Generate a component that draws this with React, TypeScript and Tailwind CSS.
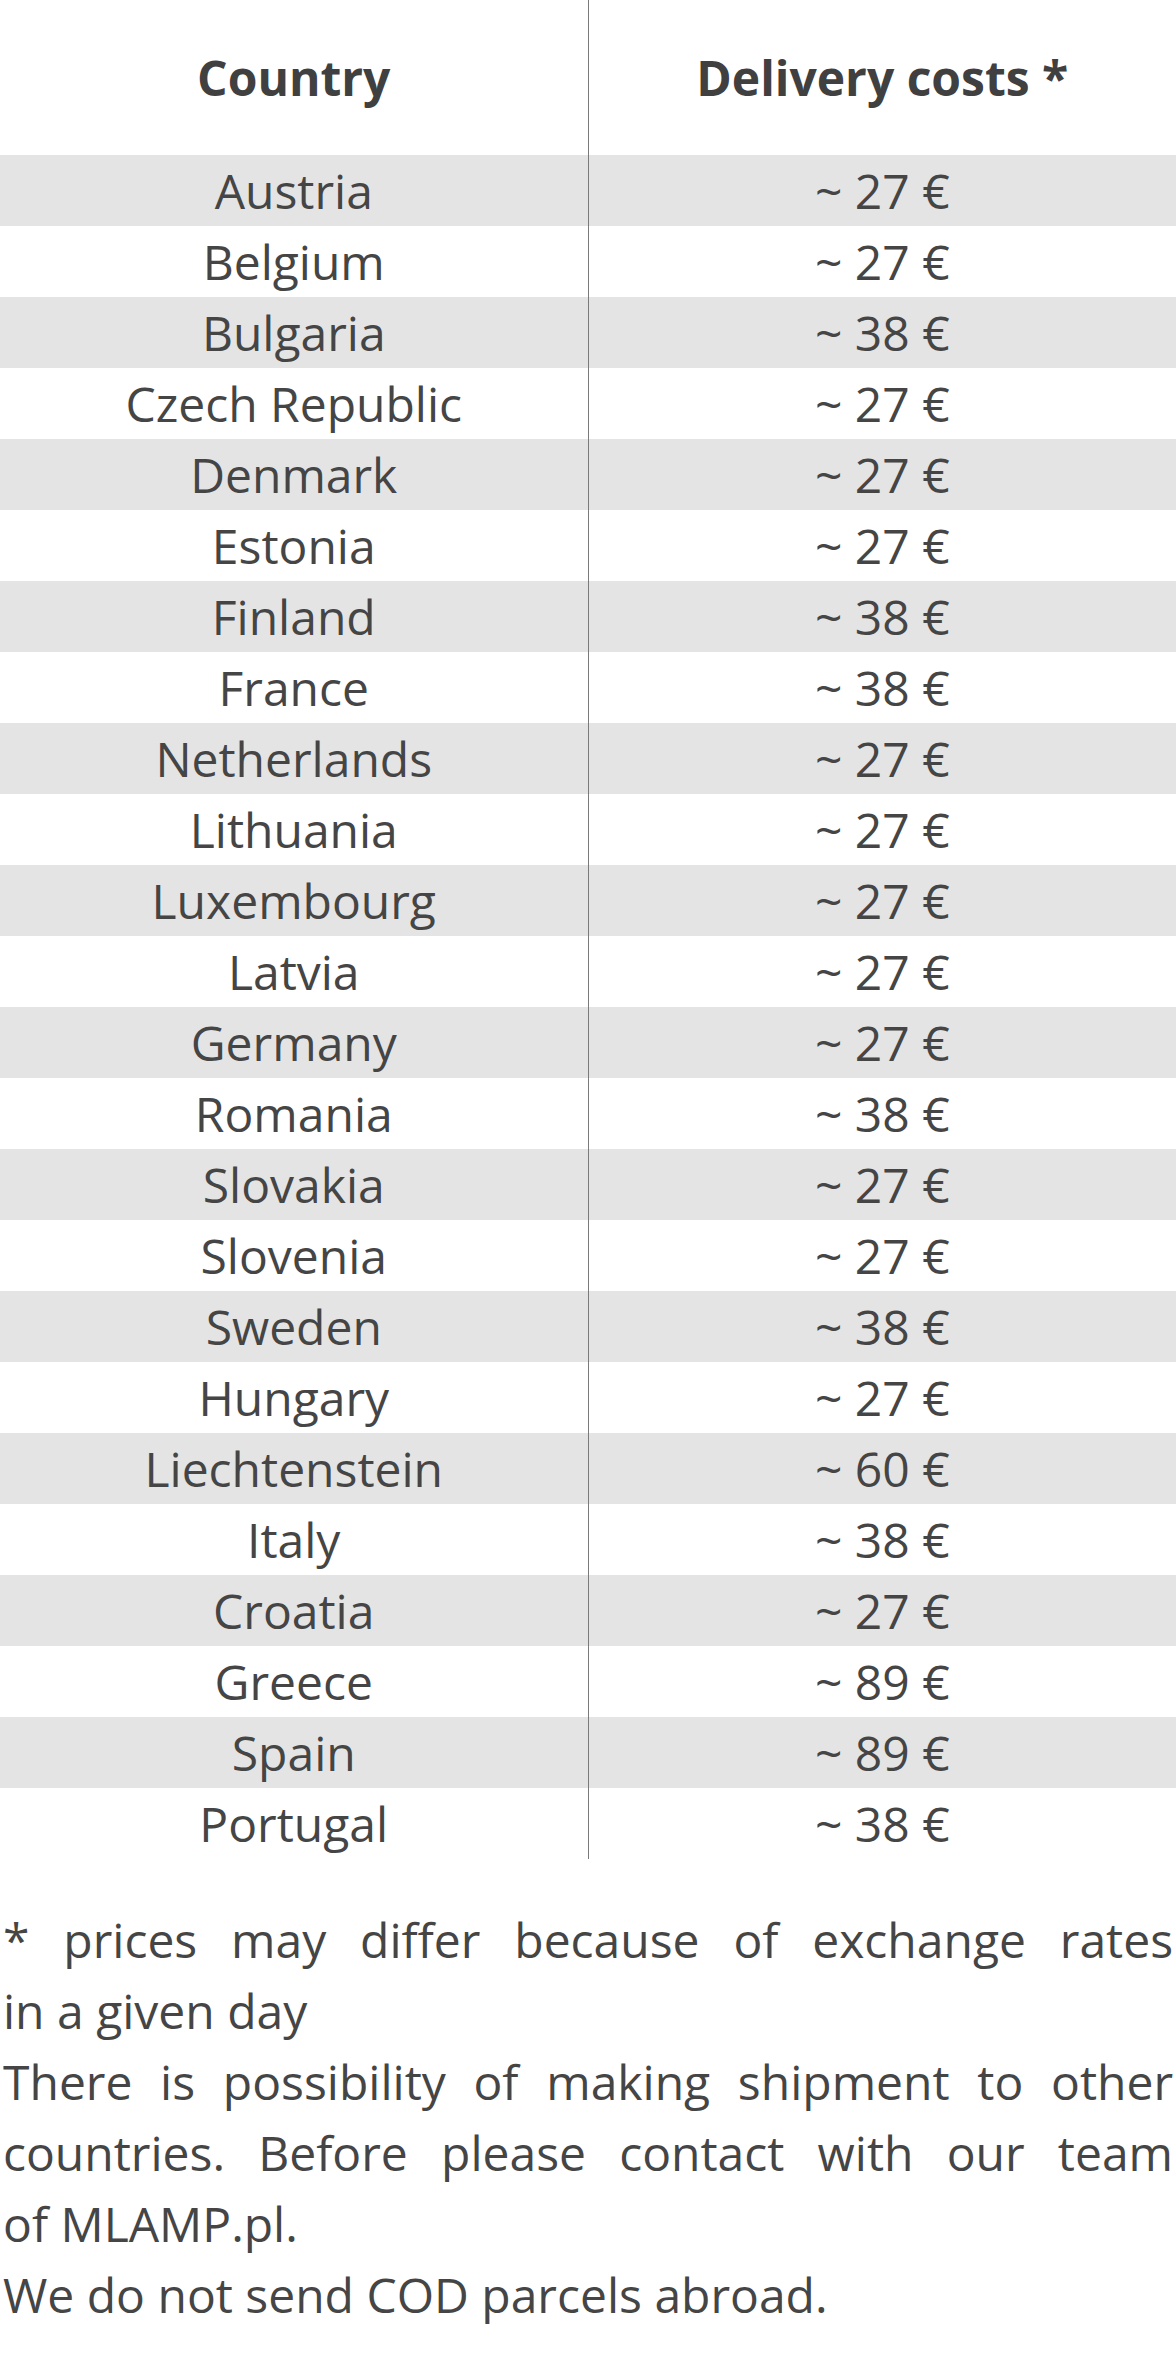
const rows: [string, string][] = [
  ['Austria', '27'],
  ['Belgium', '27'],
  ['Bulgaria', '38'],
  ['Czech Republic', '27'],
  ['Denmark', '27'],
  ['Estonia', '27'],
  ['Finland', '38'],
  ['France', '38'],
  ['Netherlands', '27'],
  ['Lithuania', '27'],
  ['Luxembourg', '27'],
  ['Latvia', '27'],
  ['Germany', '27'],
  ['Romania', '38'],
  ['Slovakia', '27'],
  ['Slovenia', '27'],
  ['Sweden', '38'],
  ['Hungary', '27'],
  ['Liechtenstein', '60'],
  ['Italy', '38'],
  ['Croatia', '27'],
  ['Greece', '89'],
  ['Spain', '89'],
  ['Portugal', '38'],
];

export default function App() {
  return (
    <div className="min-h-[2376px] w-[1176px] bg-white font-['Open_Sans',sans-serif] text-[48px] leading-[71px] text-[#454545]">
      <table className="w-full table-fixed border-collapse">
        <thead>
          <tr className="h-[155px]">
            <th className="w-[588px] border-r border-[#7a7a7a] text-center font-bold text-[#404040]">
              Country
            </th>
            <th className="text-center font-bold text-[#404040]">Delivery costs *</th>
          </tr>
        </thead>
        <tbody>
          {rows.map(([country, cost], i) => (
            <tr key={country} className={i % 2 === 0 ? 'h-[71px] bg-[#e4e4e4]' : 'h-[71px] bg-white'}>
              <td className="border-r border-[#7a7a7a] p-0 text-center font-normal">{country}</td>
              <td className="p-0 text-center font-normal">~ {cost} €</td>
            </tr>
          ))}
        </tbody>
      </table>

      {/* short words are glued to the next one, as on the original site */}
      <p className="mt-[45px] px-[3px] text-justify">
        *{'\u00a0'}prices may differ because of exchange rates in{'\u00a0'}a{'\u00a0'}given day
        <br />
        There is{'\u00a0'}possibility of{'\u00a0'}making shipment to{'\u00a0'}other countries. Before please
        contact with our team of{'\u00a0'}MLAMP.pl.
        <br />
        We do{'\u00a0'}not send COD parcels abroad.
      </p>
    </div>
  );
}
